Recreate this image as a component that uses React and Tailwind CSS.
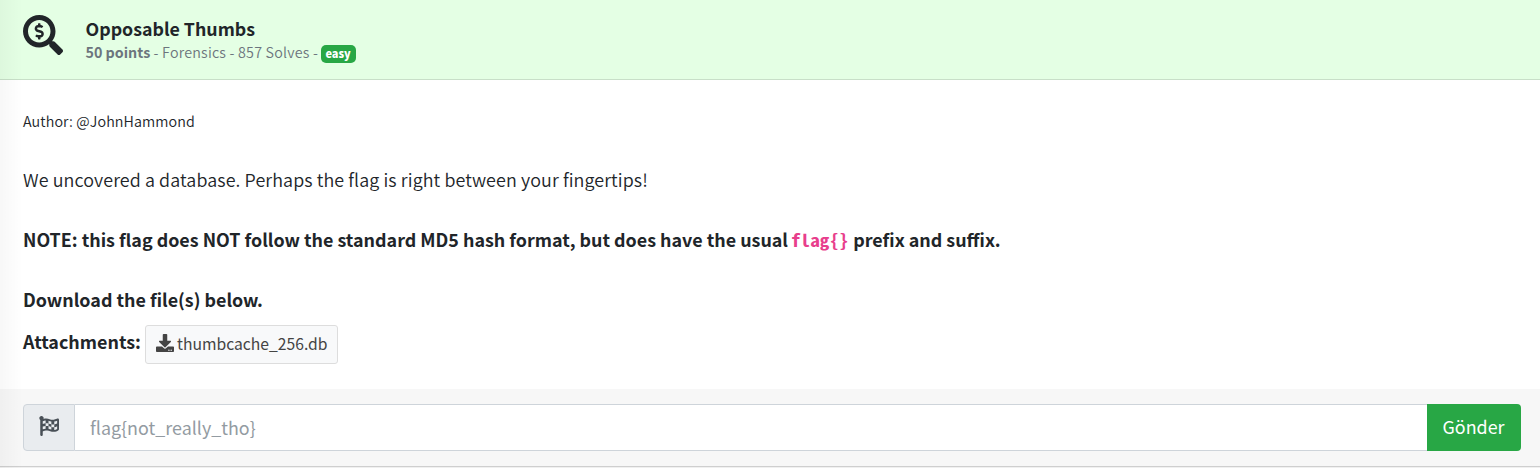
import { FaSearchDollar, FaDownload, FaFlagCheckered } from "react-icons/fa";

function Header() {
  return (
    <header className="flex h-20 border-b border-[#c8dfc8] bg-[#e4ffe4] pl-[23px]">
      <FaSearchDollar className="mt-[15px] size-10 shrink-0" />
      <div className="ml-[22.5px] pt-4 whitespace-nowrap">
        <h1 className="h-6 text-[17.8px] leading-6 font-bold"><span>Opposable Thumbs</span></h1>
        <p className="flex h-6 items-center text-[14.3px] leading-6 text-[#6c757d]">
          <span><b className="font-bold">50 points</b><span className="font-[350] tracking-[0.2px]"> - Forensics - 857 Solves -</span></span>
          <span className="mt-1 ml-[2.5px] h-[18px] w-[35px] rounded-[5px] bg-[#28a745] text-center text-[11px] leading-[17px] font-black text-white">easy</span>
        </p>
      </div>
    </header>
  );
}

function Description() {
  return (
    <main className="flex h-[309px] flex-col pl-[23px] whitespace-nowrap text-[17.9px] leading-[30px]">
      <p className="mt-[29px] h-6 text-[14.3px] leading-6 font-[350] tracking-[0.1px]"><span>Author: @JohnHammond</span></p>
      <p className="mt-[31px] font-[350] tracking-[0.1px]"><span>We uncovered a database. Perhaps the flag is right between your fingertips!</span></p>
      <p className="mt-[30px] h-[30px] font-bold">
        <span>NOTE: this flag does NOT follow the standard MD5 hash format, but does have the usual </span>
        <code className="mr-[7px] -ml-px inline-block origin-left scale-x-113 font-['Noto_Sans_Mono_CJK_SC','Liberation_Mono',monospace] text-[17px] leading-none text-[#e83e8c]">flag&#123;&#125;</code>
        <span> prefix and suffix.</span>
      </p>
      <p className="mt-[30px] font-bold"><span>Download the file(s) below.</span></p>
      <div className="mt-[11px] flex h-[39px]">
        <span className="mt-px w-[122px] font-bold">Attachments:</span>
        <a className="flex h-[39px] w-[193px] items-center rounded-[3px] border border-[#ddd] bg-[#f8f9fa] pl-[10px] text-[15.7px] text-[#444]">
          <FaDownload className="mb-[3px] size-[18px] shrink-0" />
          <span className="mb-[2px] ml-[3px]">thumbcache_256.db</span>
        </a>
      </div>
    </main>
  );
}

function FlagForm() {
  return (
    <footer className="flex h-[78px] border-b border-[#cfcfcf] bg-[#f7f7f7] pt-[15px] pr-[19px] pl-[23px]">
      <div className="flex h-[47px] w-[52px] items-center justify-center rounded-l border border-[#ced4da] bg-[#e9ecef] pb-[3px] text-[#495057]">
        <FaFlagCheckered className="size-5" />
      </div>
      <div className="flex h-[47px] flex-1 items-center border-y border-[#ced4da] bg-white pb-[2px] pl-[15px] text-[17.9px] leading-[30px] text-[#939ba2]">
        <span>flag&#123;not_really_tho&#125;</span>
      </div>
      <button className="h-[47px] w-[94px] rounded-r bg-[#28a745] pr-px pb-1 text-[17.9px] leading-[30px] text-white">Gönder</button>
    </footer>
  );
}

export default function App() {
  return (
    <div className="relative h-[468px] overflow-hidden bg-[#f0f0f0] font-['Noto_Sans_CJK_SC','Noto_Sans',sans-serif] text-[#212529]">
      <div className="bg-white">
        <Header />
        <Description />
        <FlagForm />
      </div>
      <div className="pointer-events-none absolute inset-y-0 left-0 w-[23px] bg-linear-to-r from-black/3 to-transparent" />
    </div>
  );
}
